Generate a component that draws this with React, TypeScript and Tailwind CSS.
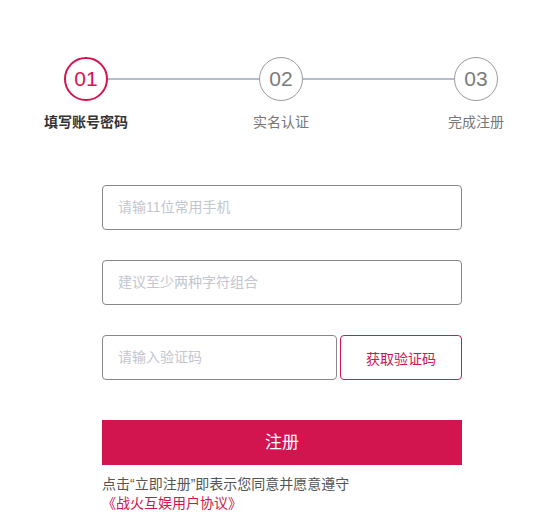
const steps = [
  { num: "01", label: "填写账号密码", active: true },
  { num: "02", label: "实名认证", active: false },
  { num: "03", label: "完成注册", active: false },
]

function Circle({ num, active }: { num: string; active: boolean }) {
  return (
    <div
      className={`w-[44px] h-[44px] shrink-0 rounded-full flex items-center justify-center text-[21px] ${
        active ? "border-2 border-[#d3154f] text-[#d3154f]" : "border border-[#9a9a9a] text-[#7b7b7b]"
      }`}
    >
      {num}
    </div>
  )
}

export default function App() {
  return (
    <div className="min-h-screen bg-white pt-[57px] font-['Liberation_Sans','Noto_Sans_CJK_SC',sans-serif]">
      <div className="flex items-center ml-[64px]">
        <Circle num={steps[0].num} active />
        <div className="w-[151px] h-[2px] bg-[#b9bccb]" />
        <Circle num={steps[1].num} active={false} />
        <div className="w-[151px] h-[2px] bg-[#b9bccb]" />
        <Circle num={steps[2].num} active={false} />
      </div>
      <div className="flex gap-[95px] ml-[36px] mt-[11px]">
        {steps.map((s) => (
          <div
            key={s.num}
            className={`w-[100px] text-center text-[14px] leading-[20px] ${
              s.active ? "font-bold text-[#333]" : "text-[#777]"
            }`}
          >
            {s.label}
          </div>
        ))}
      </div>

      <div className="ml-[102px] w-[360px] mt-[53px] flex flex-col">
        <input
          className="h-[45px] w-full rounded border border-[#888] pl-[15px] pr-4 pb-[2px] text-[14px] outline-none placeholder:text-[#c3c6d0]"
          placeholder="请输11位常用手机"
        />
        <input
          className="h-[45px] w-full rounded border border-[#888] pl-[15px] pr-4 pb-[2px] text-[14px] outline-none placeholder:text-[#c3c6d0] mt-[30px]"
          placeholder="建议至少两种字符组合"
        />
        <div className="flex gap-[3px] mt-[30px]">
          <input
            className="h-[45px] w-[235px] rounded border border-[#888] pl-[15px] pr-4 pb-[2px] text-[14px] outline-none placeholder:text-[#c3c6d0]"
            placeholder="请输入验证码"
          />
          <button className="h-[45px] flex-1 rounded border border-[#d3154f] text-[#d3154f] text-[14px] pt-[3px]">
            获取验证码
          </button>
        </div>
        <button className="h-[45px] w-full bg-[#d3154f] text-white text-[17px] mt-[40px]">注册</button>
        <p className="mt-[10px] text-[14px] leading-[19px] text-[#555]">
          点击“立即注册”即表示您同意并愿意遵守
          <br />
          <span className="text-[#d3154f]">《战火互娱用户协议》</span>
        </p>
      </div>
    </div>
  )
}
